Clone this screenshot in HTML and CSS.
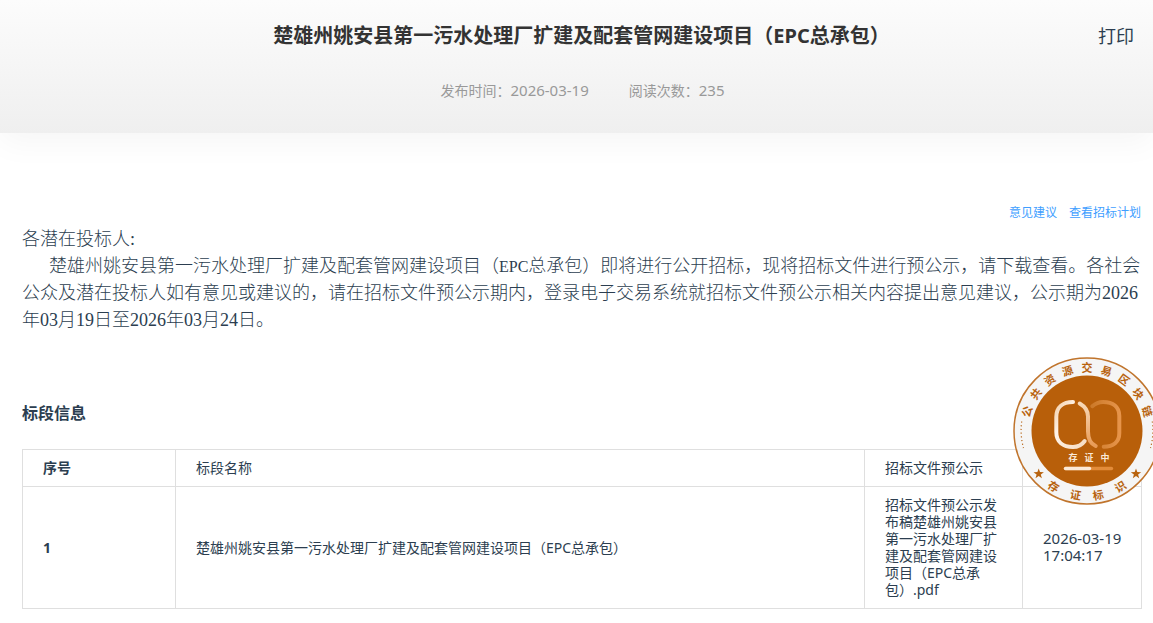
FILE: index.html
```html
<!DOCTYPE html>
<html lang="zh-CN">
<head>
    <meta charset="UTF-8">
    <meta name="viewport" content="width=device-width, initial-scale=1.0">
    <title>楚雄州姚安县第一污水处理厂扩建及配套管网建设项目（EPC总承包）</title>
    <link rel="stylesheet" href="styles.css">
</head>
<body>

<div class="page">
    <header class="header">
        <h1>楚雄州姚安县第一污水处理厂扩建及配套管网建设项目（EPC总承包）</h1>
        <button type="button" class="print" onclick="window.print()">打印</button>
        <div class="meta">
            <span>发布时间：<time class="num">2026-03-19</time></span>
            <span>阅读次数：<span class="num">235</span></span>
        </div>
    </header>

    <main class="content">
        <nav class="links">
            <a href="#">意见建议</a>
            <a href="#">查看招标计划</a>
        </nav>

        <div class="notice">
            <p>各潜在投标人:</p>
            <p class="indent">楚雄州姚安县第一污水处理厂扩建及配套管网建设项目（<span class="abbr">EPC</span>总承包）即将进行公开招标，现将招标文件进行预公示，请下载查看。各社会公众及潜在投标人如有意见或建议的，请在招标文件预公示期内，登录电子交易系统就招标文件预公示相关内容提出意见建议，公示期为2026年03月19日至2026年03月24日。</p>
        </div>

        <section class="lots">
            <h2>标段信息</h2>
            <table>
                <colgroup>
                    <col class="col-no">
                    <col>
                    <col class="col-file">
                    <col class="col-time">
                </colgroup>
                <tr>
                    <th>序号</th>
                    <td>标段名称</td>
                    <td>招标文件预公示</td>
                    <td></td>
                </tr>
                <tr class="row">
                    <th>1</th>
                    <td>楚雄州姚安县第一污水处理厂扩建及配套管网建设项目（EPC总承包）</td>
                    <td>招标文件预公示发布稿楚雄州姚安县第一污水处理厂扩建及配套管网建设项目（EPC总承包）.pdf</td>
                    <td class="num">2026-03-19 17:04:17</td>
                </tr>
            </table>

            <!-- 区块链存证标识 -->
            <svg class="seal" viewBox="0 0 148 148" role="img" aria-label="存证标识">
                <defs>
                    <linearGradient id="loopLeft" x1="0" y1="0" x2="1" y2="1">
                        <stop offset="0" stop-color="#f3cfa9"/>
                        <stop offset="0.35" stop-color="#fff3e8"/>
                        <stop offset="1" stop-color="#f6dcc2"/>
                    </linearGradient>
                    <linearGradient id="loopRight" x1="0" y1="0" x2="1" y2="0">
                        <stop offset="0" stop-color="#cc7a2a"/>
                        <stop offset="1" stop-color="#e6944a"/>
                    </linearGradient>
                    <linearGradient id="loopMiddle" x1="0" y1="0" x2="0" y2="1">
                        <stop offset="0" stop-color="#f8d9b8"/>
                        <stop offset="1" stop-color="#e89a55"/>
                    </linearGradient>
                </defs>
                <circle cx="74" cy="74" r="73" fill="#f5f5f5" stroke="#c0742c" stroke-width="1.5"/>
                <circle cx="74" cy="74" r="55.5" fill="#b85f0a"/>
                <g class="seal-ring">
                    <text x="74" y="15" transform="rotate(-72 74 74)">公</text>
                    <text x="74" y="15" transform="rotate(-54 74 74)">共</text>
                    <text x="74" y="15" transform="rotate(-36 74 74)">资</text>
                    <text x="74" y="15" transform="rotate(-18 74 74)">源</text>
                    <text x="74" y="15" transform="rotate(0 74 74)">交</text>
                    <text x="74" y="15" transform="rotate(18 74 74)">易</text>
                    <text x="74" y="15" transform="rotate(36 74 74)">区</text>
                    <text x="74" y="15" transform="rotate(54 74 74)">块</text>
                    <text x="74" y="15" transform="rotate(72 74 74)">链</text>
                    <text x="74" y="143" transform="rotate(31 74 74)">存</text>
                    <text x="74" y="143" transform="rotate(10 74 74)">证</text>
                    <text x="74" y="143" transform="rotate(-10 74 74)">标</text>
                    <text x="74" y="143" transform="rotate(-31 74 74)">识</text>
                </g>
                <g fill="none" stroke="#b8691d" stroke-width="1.2" stroke-dasharray="1.2 2.5">
                    <path d="M8.7 64.5A66 66 0 0 0 10.5 91"/>
                    <path d="M139.3 64.5A66 66 0 0 1 137.5 91"/>
                </g>
                <g fill="#b8630f">
                    <path id="star" d="M25.7 111.5l1.3 3.6 3.9.1-3.1 2.4 1.1 3.7-3.2-2.2-3.2 2.2 1.1-3.7-3.1-2.4 3.9-.1z"/>
                    <use href="#star" x="97.3"/>
                </g>
                <g fill="none" stroke-width="4" stroke-linecap="round">
                    <path stroke="url(#loopRight)" d="M79.3 49.2C83 46 86 45 90 45c10 0 16.3 5 16.3 14v17c0 9-6 13.7-15.6 13.7"/>
                    <path stroke="url(#loopMiddle)" d="M66.7 46.5c6 3.5 8.3 7 8.3 13v15c0 7 2 12 7.7 14.5"/>
                    <path stroke="url(#loopLeft)" d="M60 45c-10 0-16.7 5-16.7 15v15c0 10 6.7 15 16.7 15 5 0 9-2.3 11.7-6"/>
                </g>
                <g class="seal-center">
                    <text x="60" y="104">存</text>
                    <text x="76" y="104">证</text>
                    <text x="92" y="104">中</text>
                </g>
                <path d="M52.5 111.5h46" stroke="#e38c3a" stroke-width="3.4" stroke-linecap="round"/>
                <path d="M52.5 111.5h24" stroke="#fbe9d8" stroke-width="3.4" stroke-linecap="round"/>
            </svg>
        </section>
    </main>
</div>

</body>
</html>
```
FILE: styles.css
```css
* {
    box-sizing: border-box;
}
body {
    margin: 0;
    font-family: "Noto Sans", "Noto Sans CJK SC", sans-serif;
    font-size: 14px;
    color: #2c3e50;
    background-color: #fff;
}
h1, h2, p {
    margin: 0;
}
.page {
    overflow: hidden;
    padding-bottom: 14px;
}
.header {
    display: grid;
    grid-template-columns: 1fr auto 1fr;
    align-items: center;
    row-gap: 26px;
    padding: 20px 19px 30px;
    background: linear-gradient(#fcfcfc, #efefef);
    box-shadow: 0 10px 30px rgba(0, 0, 0, 0.04);
}
h1 {
    grid-column: 2;
    padding-left: 10px;
    font-size: 20px;
    line-height: 32px;
    color: #333;
}
.print {
    justify-self: end;
    padding: 0;
    border: 0;
    background: none;
    font-family: inherit;
    font-size: 18px;
    line-height: 32px;
    color: #2c3e50;
    cursor: pointer;
}
.meta {
    grid-column: 1 / -1;
    display: flex;
    justify-content: center;
    gap: 40px;
    padding-left: 12px;
    line-height: 24px;
    color: #999;
}
.num {
    font-size: 15px;
}
.content {
    padding: 70px 11px 0 22px;
}
.links {
    display: flex;
    justify-content: flex-end;
    gap: 12px;
    padding-right: 1px;
    font-size: 12px;
    line-height: 20px;
}
.links a {
    color: #409eff;
    text-decoration: none;
}
.notice {
    margin-top: 3px;
    font-family: "Liberation Serif", "Noto Sans CJK SC", serif;
    font-size: 18px;
    font-weight: 300;
    line-height: 27px;
}
.indent {
    text-indent: 27px;
}
.abbr {
    font-size: 16px;
}
.lots {
    position: relative;
    margin-top: 67px;
}
h2 {
    font-size: 16px;
    line-height: 24px;
    margin-bottom: 24px;
}
table {
    width: 100%;
    table-layout: fixed;
    border-collapse: collapse;
    line-height: 17px;
}
th, td {
    height: 37px;
    padding: 0 20px 2px;
    border: 1px solid #dfdfdf;
    text-align: left;
}
.row th, .row td {
    padding: 9px 20px 10px;
}
.row .num {
    padding-right: 10px;
}
.col-no {
    width: 153px;
}
.col-file {
    width: 158px;
}
.col-time {
    width: 119px;
}
.seal {
    position: absolute;
    top: -44px;
    right: -19px;
    width: 148px;
    height: 148px;
}
.seal text {
    font-family: "Noto Sans CJK SC", sans-serif;
    font-weight: bold;
    text-anchor: middle;
}
.seal-ring {
    font-size: 11px;
    fill: #b8630f;
}
.seal-center {
    font-size: 9px;
    fill: #fbe9d8;
}
```
